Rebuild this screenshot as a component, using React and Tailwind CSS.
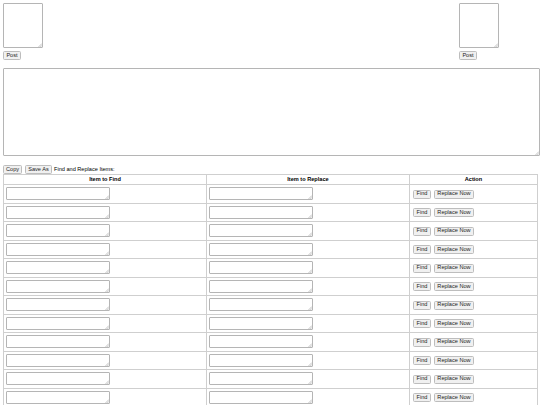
import React from "react";

const btn =
  "border border-[#bdbdbd] bg-[#f0f0f0] rounded-[1.5px] text-[5.6px] leading-none text-[#222] px-[2px] h-[9px]";

function Area({ className }) {
  return (
    <div className={`relative ${className}`}>
      <textarea className="block w-full h-full resize-none border border-[#b5b5b5] rounded-[1px] bg-white" />
      <svg
        className="absolute right-[1px] bottom-[1px] w-[4px] h-[4px] pointer-events-none"
        viewBox="0 0 4 4"
      >
        <path d="M4 0.5 L0.5 4 M4 2.3 L2.3 4" stroke="#a0a0a0" strokeWidth="0.6" />
      </svg>
    </div>
  );
}

function Row() {
  return (
    <tr className="h-[18.5px]">
      <td className="border border-[#cfcfcf] px-[2px] align-middle">
        <Area className="w-[104px] h-[13px]" />
      </td>
      <td className="border border-[#cfcfcf] px-[2px] align-middle">
        <Area className="w-[104px] h-[13px]" />
      </td>
      <td className="border border-[#cfcfcf] px-[3px] align-middle">
        <div className="flex gap-[3px] items-center pt-[1px]">
          <button className={`${btn} w-[18px]`}>Find</button>
          <button className={`${btn} w-[40px]`}>Replace Now</button>
        </div>
      </td>
    </tr>
  );
}

export default function App() {
  return (
    <div
      className="w-[540px] h-[405px] overflow-hidden bg-white text-black"
      style={{ fontFamily: '"Liberation Sans", Arial, sans-serif' }}
    >
      <div className="flex justify-between pl-[3px] pr-[41px] pt-[3px]">
        <div className="flex flex-col items-start gap-[3px]">
          <Area className="w-[40px] h-[45px]" />
          <button className={`${btn} w-[18px]`}>Post</button>
        </div>
        <div className="flex flex-col items-start gap-[3px]">
          <Area className="w-[40px] h-[45px]" />
          <button className={`${btn} w-[18px]`}>Post</button>
        </div>
      </div>
      <div className="pl-[3px] pt-[8px]">
        <Area className="w-[537px] h-[88px]" />
      </div>
      <div className="pl-[3px] pt-[9px] flex items-center gap-[3px] h-[18px]">
        <button className={`${btn} w-[19px]`}>Copy</button>
        <button className={`${btn} w-[27px]`}>Save As</button>
        <span className="text-[5.6px] leading-none ml-[-1px]">Find and Replace Items:</span>
      </div>
      <div className="pl-[3px]">
        <table className="w-[534px] border-collapse border border-[#cfcfcf] table-fixed">
          <colgroup>
            <col className="w-[203px]" />
            <col className="w-[203px]" />
            <col className="w-[128px]" />
          </colgroup>
          <thead>
            <tr className="h-[10px]">
              <th className="border border-[#cfcfcf] text-[5.6px] font-bold leading-none">Item to Find</th>
              <th className="border border-[#cfcfcf] text-[5.6px] font-bold leading-none">Item to Replace</th>
              <th className="border border-[#cfcfcf] text-[5.6px] font-bold leading-none">Action</th>
            </tr>
          </thead>
          <tbody>
            {Array.from({ length: 13 }).map((_, i) => (
              <Row key={i} />
            ))}
          </tbody>
        </table>
      </div>
    </div>
  );
}
